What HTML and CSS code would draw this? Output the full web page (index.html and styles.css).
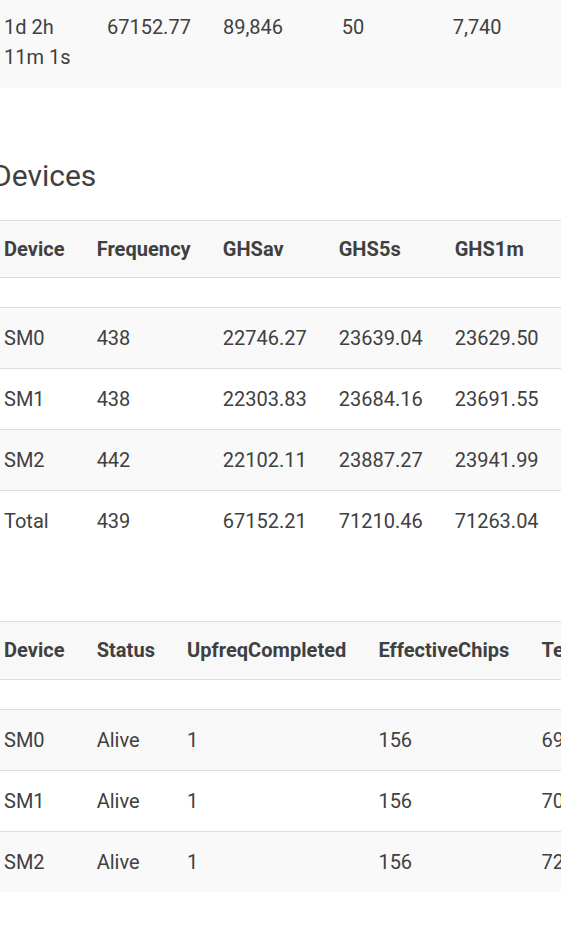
FILE: index.html
```html
<!DOCTYPE html>
<html lang="en">
<head>
<meta charset="utf-8">
<title>Devices</title>
<link rel="stylesheet" href="styles.css">
</head>
<body>
<div class="page">
  <table class="tbl summary">
    <colgroup>
      <col class="c-elapsed"><col class="c-ghs"><col class="c-found"><col class="c-pool"><col class="c-acc"><col class="c-rest">
    </colgroup>
    <tbody>
      <tr class="stripe first">
        <td class="wrap">1d 2h 11m 1s</td>
        <td>67152.77</td>
        <td>89,846</td>
        <td>50</td>
        <td>7,740</td>
        <td class="fill">0</td>
      </tr>
    </tbody>
  </table>

  <h2 class="title">Devices</h2>

  <table class="tbl">
    <thead>
      <tr>
        <th>Device</th><th>Frequency</th><th>GHSav</th><th>GHS5s</th><th>GHS1m</th><th class="fill">GHS5m</th>
      </tr>
      <tr class="spacer"><td colspan="6"></td></tr>
    </thead>
    <tbody>
      <tr class="stripe"><td>SM0</td><td>438</td><td>22746.27</td><td>23639.04</td><td>23629.50</td><td class="fill">23601.12</td></tr>
      <tr><td>SM1</td><td>438</td><td>22303.83</td><td>23684.16</td><td>23691.55</td><td class="fill">23670.08</td></tr>
      <tr class="stripe"><td>SM2</td><td>442</td><td>22102.11</td><td>23887.27</td><td>23941.99</td><td class="fill">23902.44</td></tr>
      <tr><td>Total</td><td>439</td><td>67152.21</td><td>71210.46</td><td>71263.04</td><td class="fill">71173.64</td></tr>
    </tbody>
  </table>

  <table class="tbl chips">
    <thead>
      <tr>
        <th>Device</th><th>Status</th><th>UpfreqCompleted</th><th>EffectiveChips</th><th class="fill">Temperature</th>
      </tr>
      <tr class="spacer"><td colspan="5"></td></tr>
    </thead>
    <tbody>
      <tr class="stripe"><td>SM0</td><td>Alive</td><td>1</td><td>156</td><td class="fill">69</td></tr>
      <tr><td>SM1</td><td>Alive</td><td>1</td><td>156</td><td class="fill">70</td></tr>
      <tr class="stripe"><td>SM2</td><td>Alive</td><td>1</td><td>156</td><td class="fill">72</td></tr>
    </tbody>
  </table>
</div>
</body>
</html>
```
FILE: styles.css
```css
html, body {
  margin: 0;
  padding: 0;
  background: #ffffff;
  overflow-x: hidden;
}

body {
  font-family: Roboto, "Liberation Sans", sans-serif;
  font-size: 20px;
  color: #404040;
}

.page {
  margin-left: -12px;
  width: 900px;
}

.tbl {
  border-collapse: collapse;
  line-height: 30px;
}

.tbl th,
.tbl td {
  text-align: left;
  white-space: nowrap;
  padding: 15px 16px;
  border-top: 1px solid #dedede;
  vertical-align: top;
}

.tbl th {
  font-weight: 700;
  padding: 13px 16px;
  background: #f8f8f8;
  letter-spacing: 0.05px;
}

.tbl .fill {
  width: 300px;
}

.tbl .spacer td {
  padding: 0;
  height: 29px;
  background: #ffffff;
}

.tbl .stripe td {
  background: #f9f9f9;
}

.summary {
  width: 900px;
}

.summary td {
  border-top: none;
}

.summary .first td {
  padding-top: 12px;
  padding-bottom: 16px;
}

.summary td.wrap {
  white-space: normal;
}

.c-elapsed { width: 103px; }
.c-ghs { width: 116px; }
.c-found { width: 119px; }
.c-pool { width: 111px; }
.c-acc { width: 120px; }

.title {
  margin: 70px 0 26px 4px;
  font-size: 30px;
  font-weight: 400;
  line-height: 36px;
  color: #404040;
}

.chips {
  margin-top: 70px;
}

.chips th {
  padding-bottom: 14px;
}
```
